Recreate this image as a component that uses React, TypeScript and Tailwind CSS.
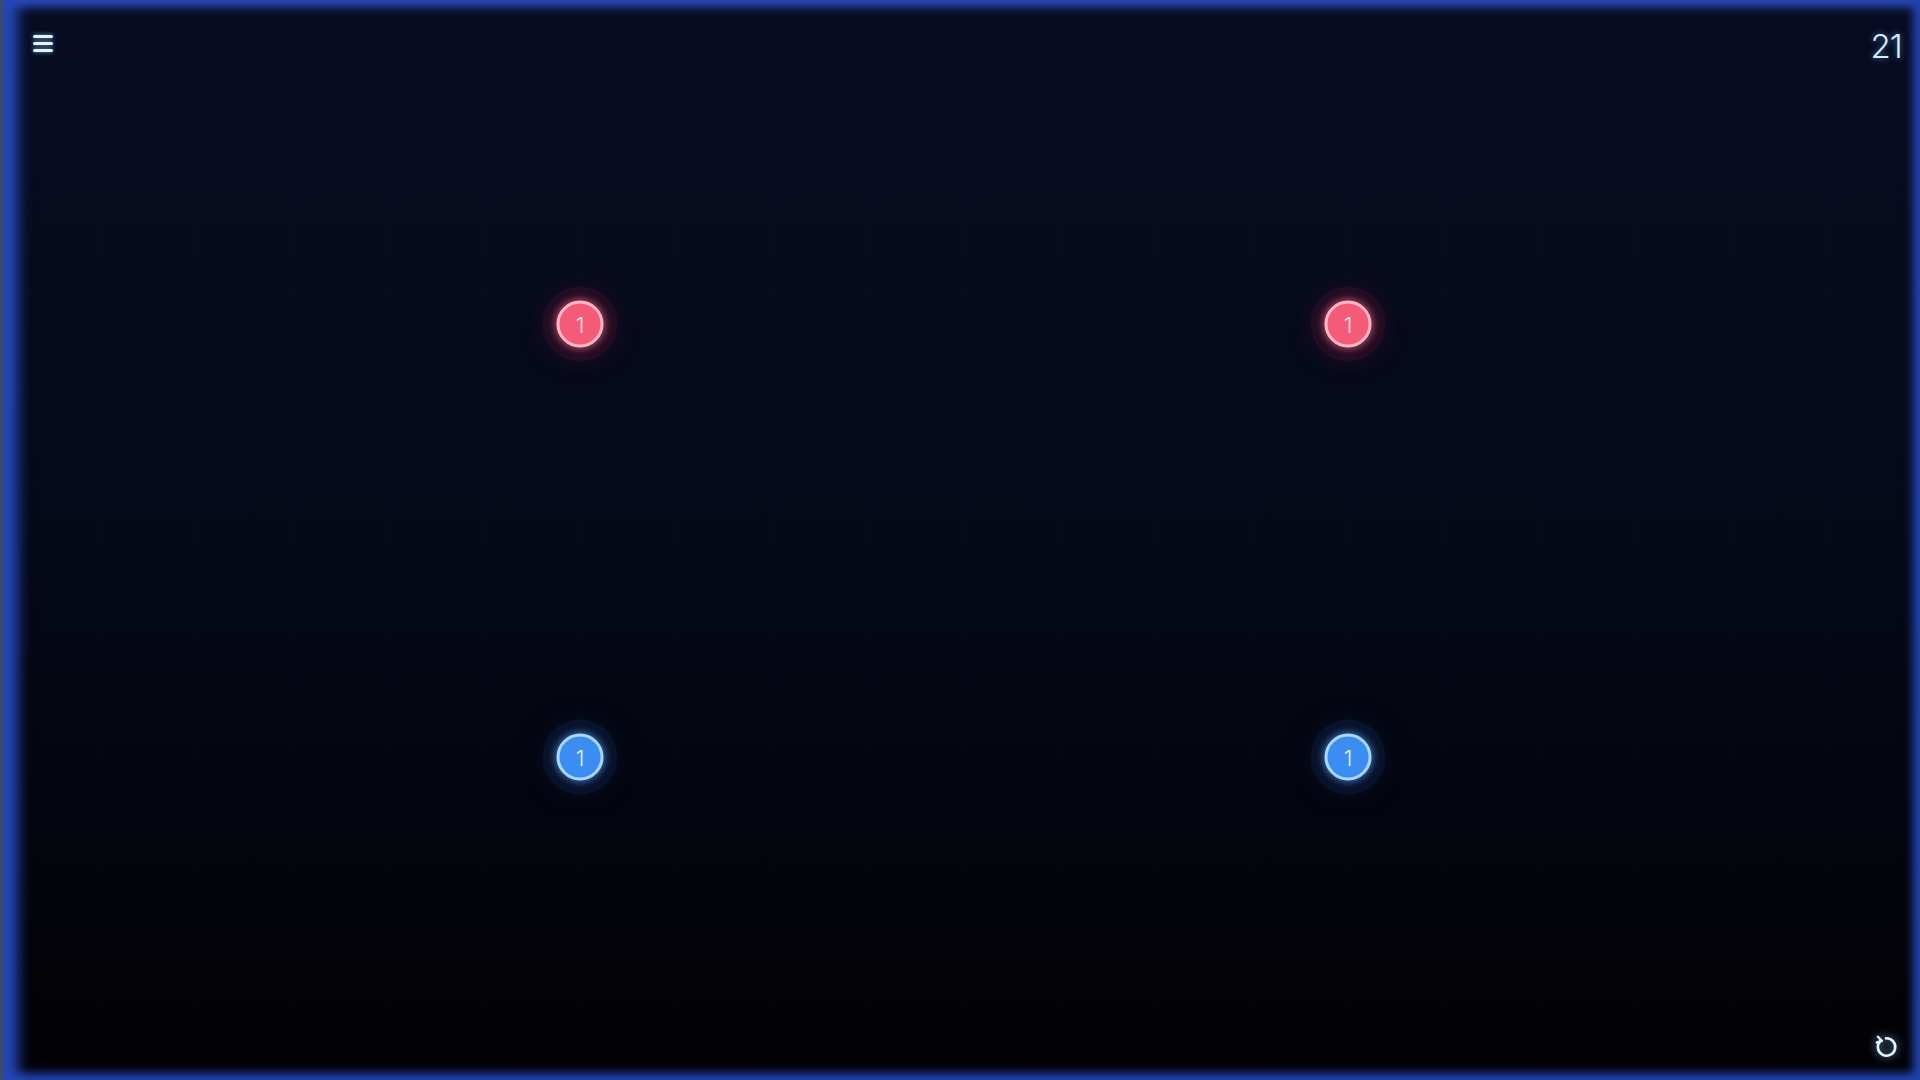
import React from 'react';

type Node = { x: number; y: number; color: 'red' | 'blue'; value: number };

const nodes: Node[] = [
  { x: 580, y: 324, color: 'red', value: 1 },
  { x: 1348, y: 324, color: 'red', value: 1 },
  { x: 580, y: 757, color: 'blue', value: 1 },
  { x: 1348, y: 757, color: 'blue', value: 1 },
];

function Dot({ node }: { node: Node }) {
  const red = node.color === 'red';
  return (
    <div
      className="absolute -translate-x-1/2 -translate-y-1/2"
      style={{ left: node.x, top: node.y }}
    >
      <div
        className={
          red
            ? 'flex h-[47px] w-[47px] items-center justify-center rounded-full border-[3px] border-[#ffb6c4] bg-[#f45b79] shadow-[0_0_6px_2px_rgba(255,110,140,0.55),0_0_0_14px_rgba(70,20,45,0.35),0_0_22px_16px_rgba(60,15,40,0.35)]'
            : 'flex h-[47px] w-[47px] items-center justify-center rounded-full border-[3px] border-[#a9d6ff] bg-[#3c8df2] shadow-[0_0_6px_2px_rgba(90,160,255,0.55),0_0_0_14px_rgba(15,35,70,0.4),0_0_22px_16px_rgba(10,25,60,0.35)]'
        }
      >
        <span
          className={
            red
              ? "font-['Inter',sans-serif] text-[22px] font-light leading-none text-[#ffe3e9]"
              : "font-['Inter',sans-serif] text-[22px] font-light leading-none text-[#e3f1ff]"
          }
        >
          {node.value}
        </span>
      </div>
    </div>
  );
}

export default function App() {
  return (
    <div className="relative h-[1080px] w-[1920px] overflow-hidden bg-gradient-to-b from-[#070c22] via-[#050918] to-[#020205] shadow-[inset_26px_0_14px_-8px_#2548b8,inset_-13px_0_10px_-6px_#2244b0,inset_0_13px_10px_-6px_#2a4cbc,inset_0_-13px_10px_-6px_#2244b0]">
      {/* outer left rim */}
      <div className="absolute inset-y-0 left-0 w-[3px] bg-[#3e4c66]" />

      {/* faint grid */}
      <div className="pointer-events-none absolute inset-0 bg-[linear-gradient(to_right,rgba(40,60,120,0.035)_1px,transparent_1px),linear-gradient(to_bottom,rgba(40,60,120,0.03)_1px,transparent_1px)] bg-[size:96px_96px]" />

      {/* top bar */}
      <div className="absolute inset-x-0 top-0 flex items-start justify-between pl-[33px] pr-[18px] pt-[33px]">
        <button className="flex w-[20px] flex-col gap-[4px] pt-[2px]" aria-label="Menu">
          <span className="h-[3px] w-full rounded-sm bg-[#e2f4ff] shadow-[0_0_4px_rgba(140,200,255,0.8)]" />
          <span className="h-[3px] w-full rounded-sm bg-[#e2f4ff] shadow-[0_0_4px_rgba(140,200,255,0.8)]" />
          <span className="h-[3px] w-full rounded-sm bg-[#e2f4ff] shadow-[0_0_4px_rgba(140,200,255,0.8)]" />
        </button>
        <span className="font-['Inter',sans-serif] text-[33px] font-light leading-[26px] tracking-tight text-[#d4ecff] [text-shadow:0_0_6px_rgba(120,190,255,0.6)]">
          21
        </span>
      </div>

      {nodes.map((n, i) => (
        <Dot key={i} node={n} />
      ))}

      {/* restart */}
      <div className="absolute bottom-[20px] right-[21px]">
        <svg width="26" height="26" viewBox="0 0 24 24" fill="none" className="drop-shadow-[0_0_4px_rgba(140,200,255,0.8)]">
          <path
            d="M7 6.2A8 8 0 1 0 12 4"
            stroke="#e2f4ff"
            strokeWidth="2.4"
            strokeLinecap="round"
          />
          <path d="M4.5 2.5 L8.2 6.4 L3.6 7.8" stroke="#e2f4ff" strokeWidth="2.2" strokeLinecap="round" strokeLinejoin="round" />
        </svg>
      </div>
    </div>
  );
}
